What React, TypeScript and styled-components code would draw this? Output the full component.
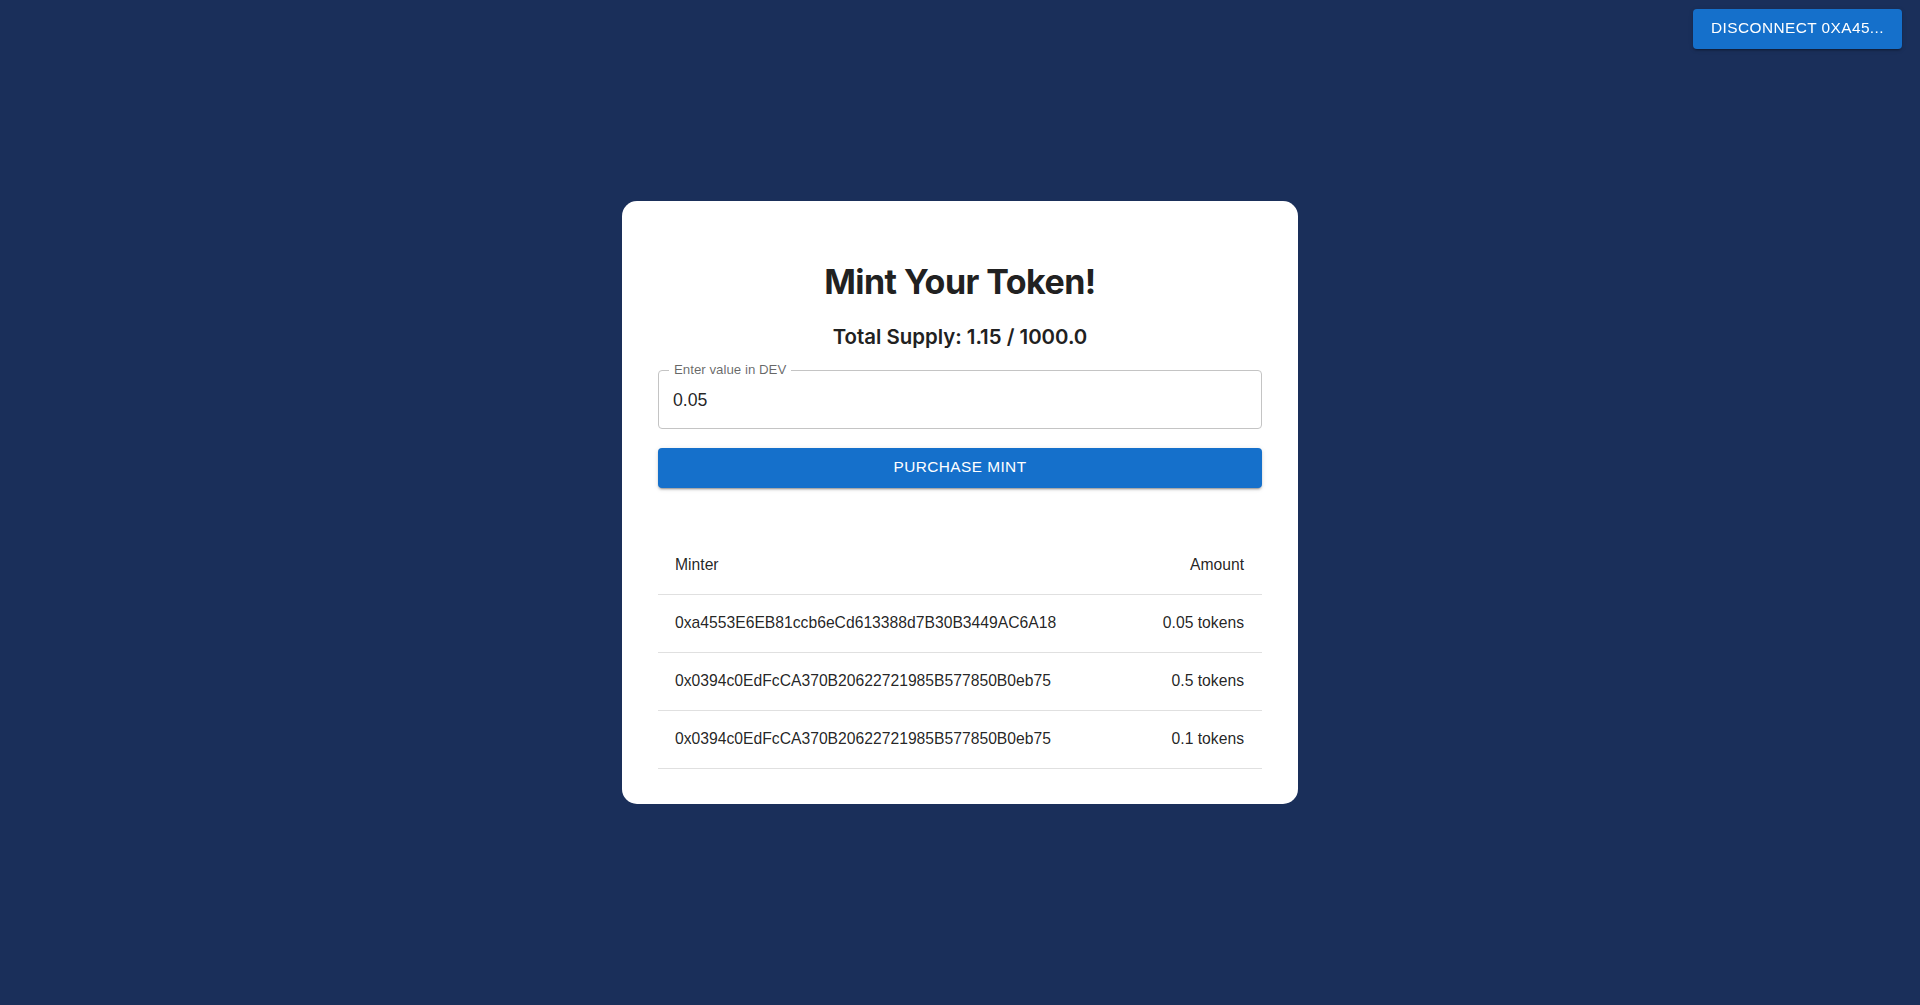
import styled, { createGlobalStyle } from "styled-components";

const GlobalStyle = createGlobalStyle`
  html, body {
    margin: 0;
    padding: 0;
    background-color: #1a2f5a;
  }
  * {
    box-sizing: border-box;
  }
`;

const Page = styled.div`
  min-height: 100vh;
  display: flex;
  align-items: center;
  justify-content: center;
  background-color: #1a2f5a;
  font-family: "Liberation Sans", Arial, sans-serif;
`;

const TopBar = styled.header`
  position: fixed;
  top: 9px;
  right: 18px;
  display: flex;
  justify-content: flex-end;
`;

const BlueButton = styled.button<{ $full?: boolean }>`
  display: flex;
  align-items: center;
  justify-content: center;
  width: ${(p) => (p.$full ? "100%" : "auto")};
  height: 40px;
  padding: 0 18px 3px;
  border: none;
  border-radius: 4px;
  background-color: #1570cb;
  color: #fff;
  font-family: "Liberation Sans", Arial, sans-serif;
  font-size: 15.4px;
  font-weight: 400;
  letter-spacing: 0.43px;
  text-transform: uppercase;
  cursor: pointer;
  box-shadow: 0px 3px 1px -2px rgba(0, 0, 0, 0.2),
    0px 2px 2px 0px rgba(0, 0, 0, 0.14), 0px 1px 5px 0px rgba(0, 0, 0, 0.12);
`;

const Card = styled.main`
  width: 676px;
  background-color: #fff;
  border-radius: 15px;
  padding: 36px 36px 35px;
  display: flex;
  flex-direction: column;
`;

const Title = styled.h1`
  margin: 24px 0 0;
  font-family: Inter, "Liberation Sans", sans-serif;
  font-size: 34px;
  line-height: 42px;
  font-weight: 700;
  color: #212121;
  text-align: center;
  letter-spacing: -0.55px;
`;

const Supply = styled.h2`
  margin: 18px 0 0;
  font-family: Inter, "Liberation Sans", sans-serif;
  font-size: 20.4px;
  line-height: 32px;
  font-weight: 600;
  color: #212121;
  text-align: center;
`;

const Field = styled.div`
  position: relative;
  margin-top: 17px;
  height: 59px;
  border: 1px solid #c4c4c4;
  border-radius: 4px;
  display: flex;
  align-items: center;
  padding: 0 14px;
`;

const FieldLabel = styled.label`
  position: absolute;
  top: -9px;
  left: 10px;
  padding: 0 5px;
  background-color: #fff;
  font-size: 13.3px;
  line-height: 16px;
  color: rgba(0, 0, 0, 0.6);
`;

const FieldInput = styled.input`
  width: 100%;
  border: none;
  outline: none;
  background: transparent;
  padding: 0 0 0 0;
  margin-top: 2px;
  font-family: "Liberation Sans", Arial, sans-serif;
  font-size: 17.7px;
  color: rgba(0, 0, 0, 0.87);
`;

const ButtonRow = styled.div`
  margin-top: 19px;
`;

const Table = styled.table`
  margin-top: 48.5px;
  width: 100%;
  border-collapse: collapse;
  font-size: 15.7px;
  line-height: 23px;
  color: rgba(0, 0, 0, 0.87);
`;

const Cell = styled.td<{ $right?: boolean }>`
  padding: 16px 18px 18px 17px;
  border-bottom: 1px solid #e0e0e0;
  text-align: ${(p) => (p.$right ? "right" : "left")};
  font-weight: 400;
`;

const HeadCell = styled(Cell).attrs({ as: "th" })``;

const mints = [
  { minter: "0xa4553E6EB81ccb6eCd613388d7B30B3449AC6A18", amount: "0.05" },
  { minter: "0x0394c0EdFcCA370B20622721985B577850B0eb75", amount: "0.5" },
  { minter: "0x0394c0EdFcCA370B20622721985B577850B0eb75", amount: "0.1" },
];

function App() {
  return (
    <>
      <GlobalStyle />
      <Page>
        <TopBar>
          <BlueButton>Disconnect 0xa45...</BlueButton>
        </TopBar>
        <Card>
          <Title>Mint Your Token!</Title>
          <Supply>Total Supply: 1.15 / 1000.0</Supply>
          <Field>
            <FieldLabel htmlFor="dev-value">Enter value in DEV</FieldLabel>
            <FieldInput id="dev-value" defaultValue="0.05" />
          </Field>
          <ButtonRow>
            <BlueButton $full>Purchase Mint</BlueButton>
          </ButtonRow>
          <Table>
            <thead>
              <tr>
                <HeadCell>Minter</HeadCell>
                <HeadCell $right>Amount</HeadCell>
              </tr>
            </thead>
            <tbody>
              {mints.map((m, i) => (
                <tr key={i}>
                  <Cell>{m.minter}</Cell>
                  <Cell $right>{m.amount} tokens</Cell>
                </tr>
              ))}
            </tbody>
          </Table>
        </Card>
      </Page>
    </>
  );
}

export default App;
